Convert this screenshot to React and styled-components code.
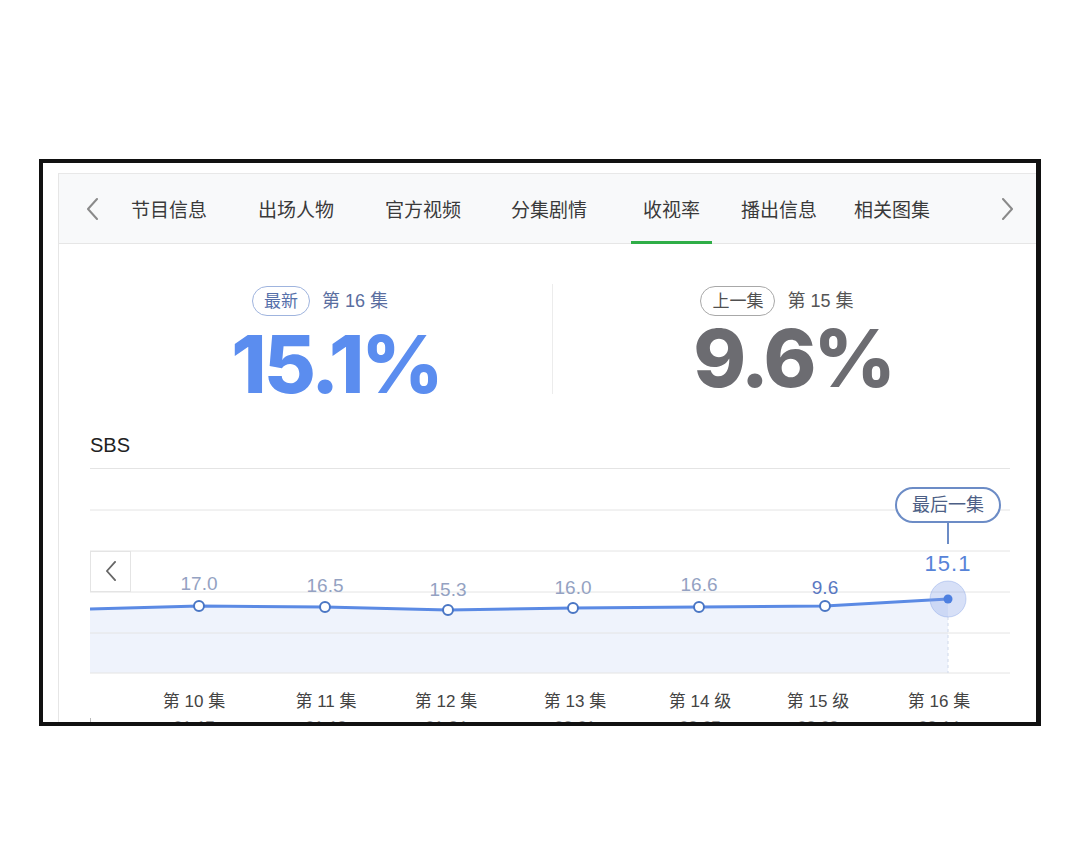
import React from 'react';
import styled, {createGlobalStyle} from 'styled-components';

const GlobalStyle = createGlobalStyle`
  html, body {
    margin: 0;
    padding: 0;
    background: #fff;
  }
  body {
    font-family: "Liberation Sans", "Noto Sans CJK SC", sans-serif;
  }
`;

const CJK = `"Liberation Sans", "Noto Sans CJK SC", sans-serif`;

const tabs = [
  {label: '节目信息', gap: 0},
  {label: '出场人物', gap: 27},
  {label: '官方视频', gap: 27},
  {label: '分集剧情', gap: 26},
  {label: '收视率', gap: 32, active: true},
  {label: '播出信息', gap: 17},
  {label: '相关图集', gap: 13},
];

const episodes = [
  {x: 109, y: 138, v: '17.0', ly: 122, ep: '第 10 集', lx: 104, date: '01-17'},
  {x: 235, y: 139, v: '16.5', ly: 124, ep: '第 11 集', lx: 236, date: '01-18'},
  {x: 358, y: 142, v: '15.3', ly: 128, ep: '第 12 集', lx: 356, date: '01-24'},
  {x: 483, y: 140, v: '16.0', ly: 126, ep: '第 13 集', lx: 485, date: '02-01'},
  {x: 609, y: 139, v: '16.6', ly: 123, ep: '第 14 级', lx: 610, date: '02-07'},
  {x: 735, y: 138, v: '9.6', ly: 126, ep: '第 15 级', lx: 728, date: '02-08', prev: true},
  {x: 858, y: 131, v: '15.1', ly: 103, ep: '第 16 集', lx: 849, date: '02-14', last: true},
];

const gridY = [0.5, 42, 83, 124, 165, 205];

const Chevron = ({dir = 'left', size = 22, color = '#8a8a8a', width = 2}) => (
  <svg width={size / 2} height={size} viewBox="0 0 11 22">
    <polyline
      points={dir === 'left' ? '10,1 1,11 10,21' : '1,1 10,11 1,21'}
      fill="none"
      stroke={color}
      strokeWidth={width}
      strokeLinecap="round"
      strokeLinejoin="round"
    />
  </svg>
);

const RatingChart = () => {
  const first = {x: 0, y: 141};
  const pts = [first, ...episodes];
  const line = pts.map((p, i) => `${i ? 'L' : 'M'}${p.x},${p.y}`).join(' ');
  const last = episodes[episodes.length - 1];
  const area = `${line} L${last.x},205 L0,205 Z`;

  return (
    <svg width="920" height="256" viewBox="0 0 920 256">
      <path d={area} fill="#eff3fc" />
      {gridY.map(y => (
        <line key={y} x1="0" x2="920" y1={y} y2={y} stroke="#e4e4e4" strokeWidth="1" />
      ))}
      <line x1={last.x} x2={last.x} y1={last.y + 18} y2="205" stroke="#cfd8ea" strokeDasharray="3 3" />
      <path d={line} fill="none" stroke="#5b8ae4" strokeWidth="3" strokeLinejoin="round" />

      {episodes.map(p =>
        p.last ? (
          <g key={p.ep}>
            <circle cx={p.x} cy={p.y} r="18" fill="rgba(130,160,230,0.32)" stroke="rgba(130,160,230,0.4)" />
            <circle cx={p.x} cy={p.y} r="4.5" fill="#4d7fe0" />
          </g>
        ) : (
          <circle key={p.ep} cx={p.x} cy={p.y} r="5" fill="#fff" stroke="#4a76c4" strokeWidth="2" />
        )
      )}

      {episodes.map(p => (
        <text
          key={p.v + p.ep}
          x={p.x}
          y={p.ly}
          textAnchor="middle"
          fontFamily={CJK}
          fontSize={p.last ? 22 : 19}
          letterSpacing={p.last ? 1 : 0}
          fill={p.last ? '#5783d8' : p.prev ? '#5a78c2' : '#94a2c2'}
        >
          {p.v}
        </text>
      ))}

      <rect x={last.x - 52} y="20" width="104" height="34" rx="17" fill="#fff" stroke="#6c8cc6" strokeWidth="2" />
      <text x={last.x} y="43" textAnchor="middle" fontFamily={CJK} fontSize="18" fill="#4d5f86">
        最后一集
      </text>
      <line x1={last.x} x2={last.x} y1="54" y2="76" stroke="#6c8cc6" strokeWidth="2" />

      {episodes.map(p => (
        <g key={p.date}>
          <text x={p.lx} y="239" textAnchor="middle" fontFamily={CJK} fontSize="17" fill="#444">
            {p.ep}
          </text>
          <text x={p.lx} y="265" textAnchor="middle" fontFamily={CJK} fontSize="16" fill="#999">
            {p.date}
          </text>
        </g>
      ))}
      <line x1="0.5" x2="0.5" y1="250" y2="256" stroke="#bbb" />
    </svg>
  );
};

const App = () => {
  return (
    <>
      <GlobalStyle />
      <Frame>
        <Card>
          <TabBar>
            <ArrowButton $side="left">
              <Chevron dir="left" />
            </ArrowButton>
            {tabs.map(t => (
              <Tab key={t.label} $gap={t.gap} $active={t.active}>
                {t.label}
              </Tab>
            ))}
            <ArrowButton $side="right">
              <Chevron dir="right" />
            </ArrowButton>
          </TabBar>

          <Stats>
            <Panel $width={432}>
              <BadgeRow>
                <Badge $tone="blue">最新</Badge>
                <Episode $tone="blue">第 16 集</Episode>
              </BadgeRow>
              <BigNumber $tone="blue">15.1%</BigNumber>
            </Panel>
            <Divider />
            <Panel $width={480}>
              <BadgeRow>
                <Badge $tone="gray">上一集</Badge>
                <Episode $tone="gray">第 15 集</Episode>
              </BadgeRow>
              <BigNumber $tone="gray">9.6%</BigNumber>
            </Panel>
          </Stats>

          <ChartSection>
            <Channel>SBS</Channel>
            <ChartWrap>
              <RatingChart />
              <ChartPrev>
                <Chevron dir="left" size={20} color="#666" />
              </ChartPrev>
            </ChartWrap>
          </ChartSection>
        </Card>
      </Frame>
    </>
  );
};

const Frame = styled.div`
  margin: 159px 0 0 39px;
  width: 1002px;
  height: 567px;
  box-sizing: border-box;
  border: 4px solid #111;
  border-right-width: 5px;
  padding: 10px 0 0 15px;
  overflow: hidden;
  background: #fff;
`;

const Card = styled.div`
  height: 100%;
  border-left: 1px solid #e6e6e6;
  border-top: 1px solid #e8e8e8;
  background: #fff;
`;

const TabBar = styled.div`
  display: flex;
  align-items: stretch;
  height: 69px;
  background: #f8f9fa;
  border-bottom: 1px solid #e6e6e6;
`;

const ArrowButton = styled.div`
  display: flex;
  align-items: center;
  justify-content: ${p => (p.$side === 'left' ? 'flex-end' : 'flex-start')};
  width: ${p => (p.$side === 'left' ? '60px' : 'auto')};
  padding-right: ${p => (p.$side === 'left' ? '21px' : '0')};
  margin-left: ${p => (p.$side === 'right' ? 'auto' : '0')};
  margin-right: ${p => (p.$side === 'right' ? '23px' : '0')};
  box-sizing: border-box;
`;

const Tab = styled.div`
  position: relative;
  display: flex;
  align-items: center;
  padding: 0 12px;
  margin-left: ${p => p.$gap}px;
  font-family: ${CJK};
  font-size: 19px;
  color: #3a3a3a;
  white-space: nowrap;

  &::after {
    content: '';
    position: absolute;
    left: 0;
    right: 0;
    bottom: -1px;
    height: 3px;
    background: ${p => (p.$active ? '#2fae47' : 'transparent')};
  }
`;

const Stats = styled.div`
  display: flex;
  padding-left: 61px;
  margin-top: 40px;
  height: 110px;
`;

const Panel = styled.div`
  width: ${p => p.$width}px;
  display: flex;
  flex-direction: column;
  align-items: center;
`;

const Divider = styled.div`
  width: 1px;
  background: #ececec;
`;

const BadgeRow = styled.div`
  display: flex;
  align-items: center;
  gap: 12px;
  height: 30px;
  margin-top: 2px;
  margin-right: 32px;
  font-family: ${CJK};
  line-height: 1;
`;

const Badge = styled.span`
  display: inline-flex;
  align-items: center;
  height: 28px;
  padding: 0 11px;
  border-radius: 15px;
  border: 1.5px solid ${p => (p.$tone === 'blue' ? '#9fb4de' : '#a8a8a8')};
  color: ${p => (p.$tone === 'blue' ? '#5670aa' : '#505050')};
  font-size: 17px;
`;

const Episode = styled.span`
  font-size: 18px;
  color: ${p => (p.$tone === 'blue' ? '#5a6ea0' : '#555')};
`;

const BigNumber = styled.div`
  margin-top: ${p => (p.$tone === 'blue' ? '17px' : '11px')};
  font-family: Inter, "Liberation Sans", sans-serif;
  font-weight: 800;
  font-size: 80px;
  line-height: 62px;
  letter-spacing: -3px;
  color: ${p => (p.$tone === 'blue' ? '#5b8def' : '#6c6c71')};
`;

const ChartSection = styled.div`
  padding: 0 0 0 31px;
  margin-top: 40px;
`;

const Channel = styled.div`
  font-family: "Liberation Sans", sans-serif;
  font-size: 20px;
  color: #222;
  line-height: 22px;
  margin-bottom: 12px;
`;

const ChartWrap = styled.div`
  position: relative;
  width: 920px;
  height: 256px;

  svg {
    display: block;
  }
`;

const ChartPrev = styled.div`
  position: absolute;
  left: 0;
  top: 83px;
  width: 41px;
  height: 41px;
  box-sizing: border-box;
  border: 1px solid #e4e4e4;
  background: #fff;
  display: flex;
  align-items: center;
  justify-content: center;
  padding-bottom: 2px;
`;

export default App;
